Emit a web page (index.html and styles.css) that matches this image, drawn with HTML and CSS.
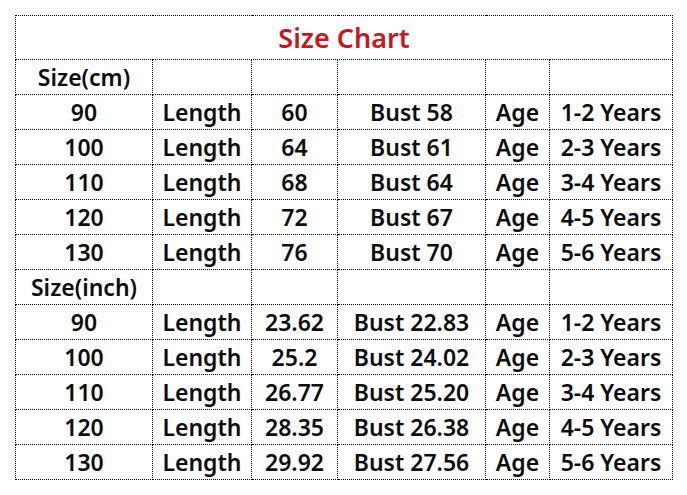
FILE: index.html
```html
<!DOCTYPE html>
<html>
<head>
<meta charset="utf-8">
<link rel="stylesheet" href="styles.css">
</head>
<body>
<table class="chart">
  <colgroup>
    <col class="c1"><col class="c2"><col class="c3"><col class="c4"><col class="c5"><col class="c6">
  </colgroup>
  <tr class="title-row"><td colspan="6" class="title">Size Chart</td></tr>
  <tr><td>Size(cm)</td><td></td><td></td><td></td><td></td><td></td></tr>
  <tr><td>90</td><td>Length</td><td>60</td><td>Bust 58</td><td>Age</td><td>1-2 Years</td></tr>
  <tr><td>100</td><td>Length</td><td>64</td><td>Bust 61</td><td>Age</td><td>2-3 Years</td></tr>
  <tr><td>110</td><td>Length</td><td>68</td><td>Bust 64</td><td>Age</td><td>3-4 Years</td></tr>
  <tr><td>120</td><td>Length</td><td>72</td><td>Bust 67</td><td>Age</td><td>4-5 Years</td></tr>
  <tr><td>130</td><td>Length</td><td>76</td><td>Bust 70</td><td>Age</td><td>5-6 Years</td></tr>
  <tr><td>Size(inch)</td><td></td><td></td><td></td><td></td><td></td></tr>
  <tr><td>90</td><td>Length</td><td>23.62</td><td>Bust 22.83</td><td>Age</td><td>1-2 Years</td></tr>
  <tr><td>100</td><td>Length</td><td>25.2</td><td>Bust 24.02</td><td>Age</td><td>2-3 Years</td></tr>
  <tr><td>110</td><td>Length</td><td>26.77</td><td>Bust 25.20</td><td>Age</td><td>3-4 Years</td></tr>
  <tr><td>120</td><td>Length</td><td>28.35</td><td>Bust 26.38</td><td>Age</td><td>4-5 Years</td></tr>
  <tr><td>130</td><td>Length</td><td>29.92</td><td>Bust 27.56</td><td>Age</td><td>5-6 Years</td></tr>
</table>
</body>
</html>
```
FILE: styles.css
```css
html, body {
  margin: 0;
  padding: 0;
  background: #ffffff;
}
body {
  padding: 15px;
  font-family: "Noto Sans", "Open Sans", sans-serif;
}
.chart {
  border-collapse: collapse;
  table-layout: fixed;
  width: 657px;
}
.c1 { width: 137px; }
.c2 { width: 99px; }
.c3 { width: 86px; }
.c4 { width: 148px; }
.c5 { width: 64px; }
.c6 { width: 123px; }
.chart td {
  border: 1px dotted #000;
  height: 34px;
  padding: 0;
  text-align: center;
  vertical-align: middle;
  font-size: 23px;
  font-weight: 600;
  color: #0d0d0d;
  white-space: nowrap;
  line-height: 1;
}
.chart .title {
  height: 43px;
  font-size: 27px;
  color: #c8171e;
}
```
